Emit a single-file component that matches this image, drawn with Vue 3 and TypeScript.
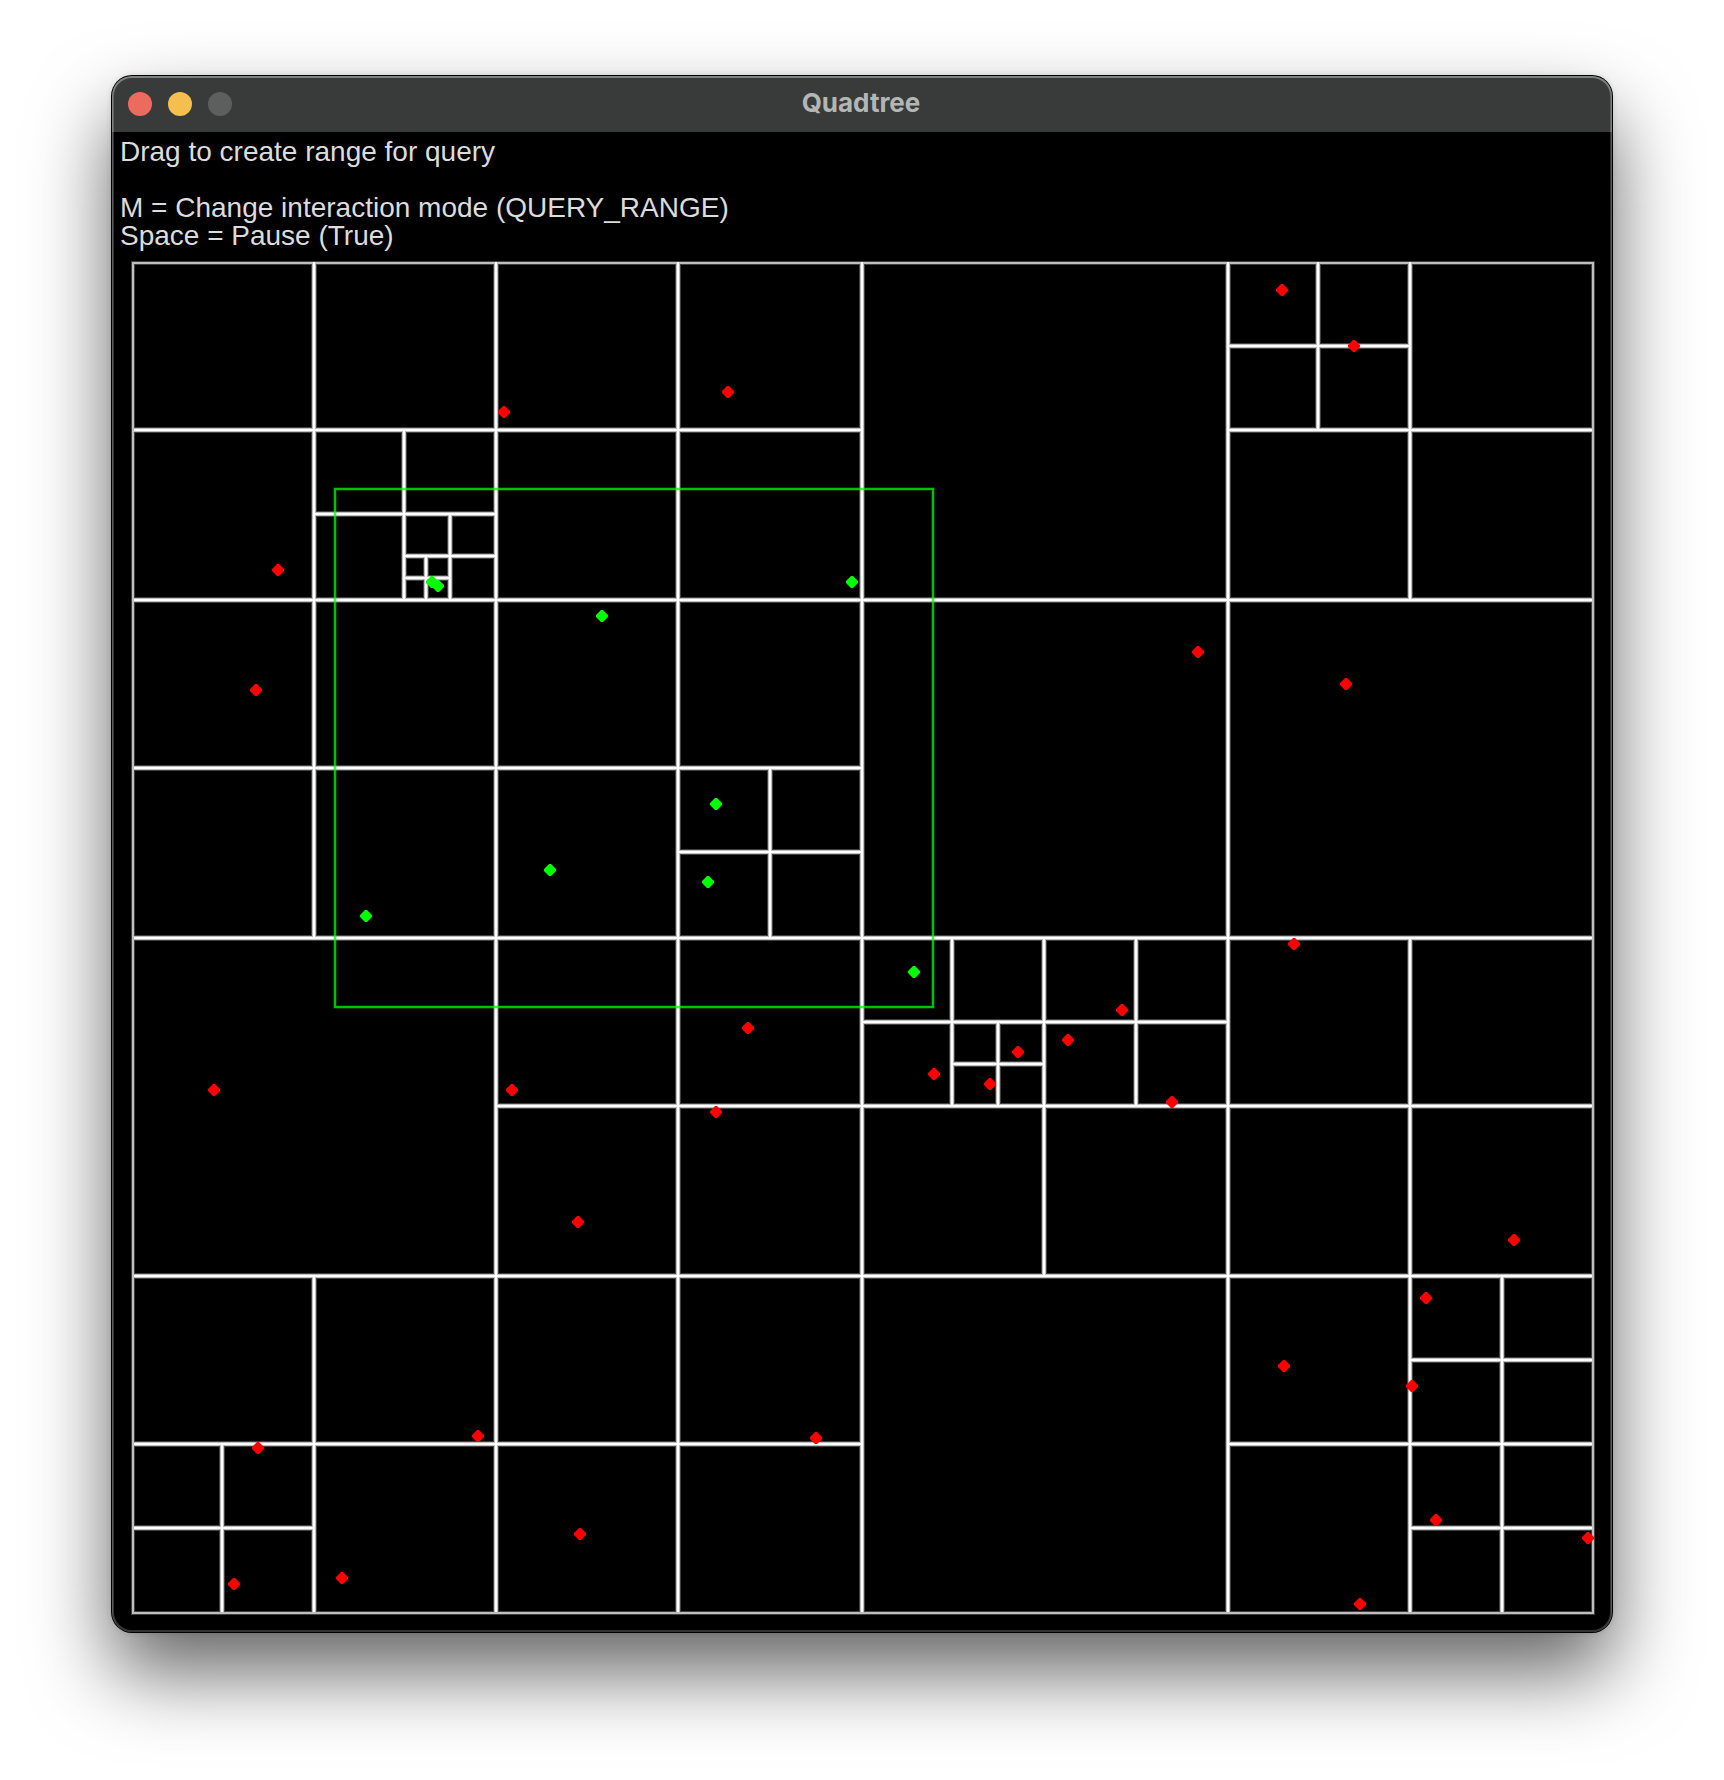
<script setup lang="ts">
type Segment = [number, number, number, number]
type Point = [number, number]

// All geometry is in the simulation's own units, one unit per game pixel.
const dividers: Segment[] = [
  [101, 65, 101, 403], [101, 572, 101, 740], [192, 65, 192, 740], [283, 65, 283, 740],
  [375, 65, 375, 740], [558, 65, 558, 740], [649, 65, 649, 234], [649, 403, 649, 740],
  [603, 65, 603, 149], [146, 149, 146, 234], [169, 191, 169, 234], [157, 212, 157, 234],
  [329, 318, 329, 403], [420, 403, 420, 487], [443, 445, 443, 487], [466, 403, 466, 572],
  [512, 403, 512, 487], [695, 572, 695, 740], [55, 656, 55, 740],
  [558, 107, 649, 107], [11, 149, 375, 149], [558, 149, 740, 149], [101, 191, 192, 191],
  [146, 212, 192, 212], [146, 223, 169, 223], [11, 234, 740, 234], [11, 318, 375, 318],
  [283, 360, 375, 360], [11, 403, 740, 403], [375, 445, 558, 445], [420, 466, 466, 466],
  [192, 487, 740, 487], [11, 572, 740, 572], [649, 614, 740, 614], [11, 656, 375, 656],
  [558, 656, 740, 656], [11, 698, 101, 698], [649, 698, 740, 698],
]

const outside: Point[] = [
  [196, 140], [308, 130], [83, 219], [72, 279], [585, 79], [621, 107], [543, 260], [617, 276],
  [591, 406], [318, 448], [302, 490], [411, 471], [439, 476], [453, 460], [478, 454], [505, 439],
  [530, 485], [51, 479], [200, 479], [233, 545], [701, 554], [657, 583], [650, 627], [662, 694],
  [738, 703], [586, 617], [73, 658], [183, 652], [352, 653], [61, 726], [115, 723], [234, 701],
  [624, 736],
]

const inside: Point[] = [
  [160, 225], [163, 227], [245, 242], [370, 225], [302, 336], [298, 375], [219, 369], [127, 392],
  [401, 420],
]

const gridPath = dividers.map(([x1, y1, x2, y2]) => `M${x1} ${y1}L${x2} ${y2}`).join('')

// A diamond six units wide with blunt tips.
const diamonds = (points: Point[]) =>
  points
    .map(([x, y]) => `M${x - 3} ${y - 0.5}l2.5 -2.5h1l2.5 2.5v1l-2.5 2.5h-1l-2.5 -2.5z`)
    .join('')
</script>

<template>
  <main class="desktop">
    <section class="window" aria-label="Quadtree">
      <header class="titlebar">
        <div class="controls">
          <button class="dot close" type="button" aria-label="Close"></button>
          <button class="dot minimize" type="button" aria-label="Minimize"></button>
          <button class="dot zoom" type="button" aria-label="Zoom" disabled></button>
        </div>
        <h1 class="title">Quadtree</h1>
      </header>
      <div class="content">
        <div class="help">
          <p class="line hint">Drag to create range for query</p>
          <p class="line">M = Change interaction mode (QUERY_RANGE)</p>
          <p class="line">Space = Pause (True)</p>
        </div>
        <svg class="tree" viewBox="10 65 731 676" role="img" aria-label="Quadtree cells and points">
          <rect class="frame-halo" x="10.5" y="65.5" width="730" height="675" />
          <path class="halo" :d="gridPath" />
          <rect class="frame" x="10.5" y="65.5" width="730" height="675" />
          <path class="edge" :d="gridPath" />
          <path class="core" :d="gridPath" />
          <path class="outside" :d="diamonds(outside)" />
          <path class="inside" :d="diamonds(inside)" />
          <rect class="range-halo" x="111.5" y="178.5" width="299" height="259" />
          <rect class="range" x="111.5" y="178.5" width="299" height="259" />
        </svg>
      </div>
    </section>
  </main>
</template>

<style>
body {
  margin: 0;
  background: #fff;
}
</style>

<style scoped>
.desktop {
  padding: 76px 112px 148px;
  overflow: hidden;
}

.window {
  position: relative;
  border-radius: 20px;
  background: #000;
  box-shadow: 0 0 0 1px #000, 0 0 6px rgba(0, 0, 0, 0.15), 0 40px 80px rgba(0, 0, 0, 0.61);
}

.window::after {
  content: '';
  position: absolute;
  inset: 0;
  border-radius: 20px;
  box-shadow: inset 0 0 0 2px rgba(255, 255, 255, 0.2), inset 0 1px 0 1px rgba(255, 255, 255, 0.2);
  pointer-events: none;
}

.titlebar {
  display: grid;
  grid-template-columns: 1fr auto 1fr;
  align-items: center;
  height: 56px;
  padding: 0 16px;
  box-sizing: border-box;
  border-radius: 20px 20px 0 0;
  background: #393b3a;
}

.controls {
  display: flex;
  gap: 16px;
}

.dot {
  width: 24px;
  height: 24px;
  padding: 0;
  border: 0;
  border-radius: 50%;
}

.close {
  background: #ed6a5e;
}

.minimize {
  background: #f5bf4f;
}

.zoom {
  background: #5d5f5e;
}

.title {
  margin: 0;
  padding: 0 2px 2px 0;
  color: #b4b5b5;
  font: 700 26px/32px Inter, sans-serif;
}

.content {
  padding: 6px 18px 18px 8px;
}

.help {
  height: 124px;
  color: #dcdcdc;
  font: 28px/28px "Liberation Sans", Arial, sans-serif;
}

.line {
  margin: 0;
}

.hint {
  margin-bottom: 28px;
}

.tree {
  display: block;
  width: calc(100% - 12px);
  margin-left: 12px;
  overflow: visible;
}

.frame-halo,
.frame,
.halo,
.edge,
.core,
.range-halo,
.range {
  fill: none;
}

.frame-halo {
  stroke: #404040;
  stroke-width: 2;
}

.frame {
  stroke: #bfbfbf;
}

.halo {
  stroke: #404040;
  stroke-width: 3;
}

.edge {
  stroke: #bfbfbf;
  stroke-width: 2;
}

.core {
  stroke: #fff;
  stroke-width: 1;
}

.outside {
  fill: #f00;
}

.inside {
  fill: #0f0;
}

.range-halo {
  stroke: rgba(0, 255, 0, 0.2);
  stroke-width: 2;
}

.range {
  stroke: rgba(0, 255, 0, 0.7);
}
</style>
